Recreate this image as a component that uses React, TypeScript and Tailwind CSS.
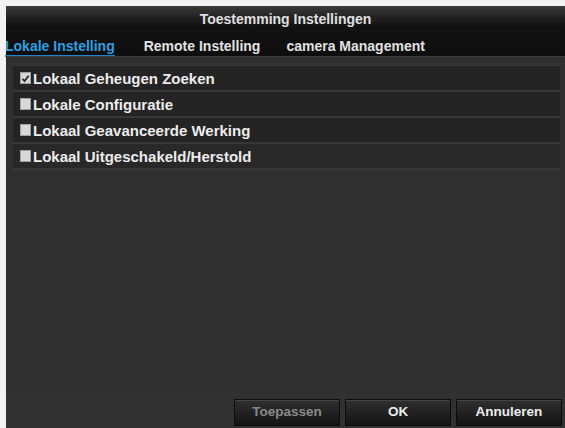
import React from "react";

const rows = [
  { label: "Lokaal Geheugen Zoeken", checked: true, bg: "bg-[#242424]" },
  { label: "Lokale Configuratie", checked: false, bg: "bg-[#242424]" },
  { label: "Lokaal Geavanceerde Werking", checked: false, bg: "bg-[#242424]" },
  { label: "Lokaal Uitgeschakeld/Herstold", checked: false, bg: "bg-[#282828]" },
];

function Box({ checked }: { checked: boolean }) {
  return (
    <div className="w-[11px] h-[12px] bg-[#d8d8d8] border border-[#a0a0a0] flex items-center justify-center shrink-0">
      {checked && (
        <svg width="9" height="9" viewBox="0 0 9 9">
          <path d="M1.5 4.8 L3.6 7 L7.6 1.8" stroke="#2a2a2a" strokeWidth="1.8" fill="none" />
        </svg>
      )}
    </div>
  );
}

export default function App() {
  return (
    <div
      className="w-[565px] h-[428px] bg-[#f2f2f2] pt-[6px] pl-[6px] overflow-hidden"
      style={{ fontFamily: '"Liberation Sans", Arial, sans-serif' }}
    >
      <div className="h-full flex flex-col bg-[#303030]">
        <div className="bg-gradient-to-b from-[#3a3a3a] via-[#121212] via-40% to-[#0e0e0e]">
          <div className="h-[26px] flex items-center justify-center text-[14px] font-bold text-[#e0e0e0] leading-[16px]">
            Toestemming Instellingen
          </div>
          <div className="h-[24px] flex items-start pt-[6px] text-[14px] font-bold leading-[16px]">
            <div className="text-[#2f9fe4] border-b-2 border-[#1f86cc] pb-[1px] -ml-[1px]">Lokale Instelling</div>
            <div className="text-[#e2e2e2] ml-[29px]">Remote Instelling</div>
            <div className="text-[#e2e2e2] ml-[26px]">camera Management</div>
          </div>
        </div>
        <div className="h-[1px] bg-[#3c3c3c]" />
        <div className="flex-1 pl-[7px] pr-[5px] pt-[8px]">
          <div className="border-t border-[#3a3a3a]">
            {rows.map((r) => (
              <div
                key={r.label}
                className={`h-[26px] flex items-center gap-[2px] pl-[7px] ${r.bg} border-b-2 border-[#383838] text-[15px] font-bold text-[#ececec]`}
              >
                <Box checked={r.checked} />
                <span className="leading-[17px]">{r.label}</span>
              </div>
            ))}
          </div>
        </div>
        <div className="h-[36px] flex justify-end items-end gap-[5px] pr-[3px] pb-[2px] bg-[#313131]">
          {[
            { t: "Toepassen", c: "text-[#8a8a8a]" },
            { t: "OK", c: "text-[#ececec]" },
            { t: "Annuleren", c: "text-[#ececec]" },
          ].map((b) => (
            <div
              key={b.t}
              className={`w-[106px] h-[27px] flex items-center justify-center bg-gradient-to-b from-[#303030] to-[#141414] border border-[#0c0c0c] shadow-[inset_0_1px_0_#444] text-[13.5px] font-bold ${b.c}`}
            >
              {b.t}
            </div>
          ))}
        </div>
      </div>
    </div>
  );
}
